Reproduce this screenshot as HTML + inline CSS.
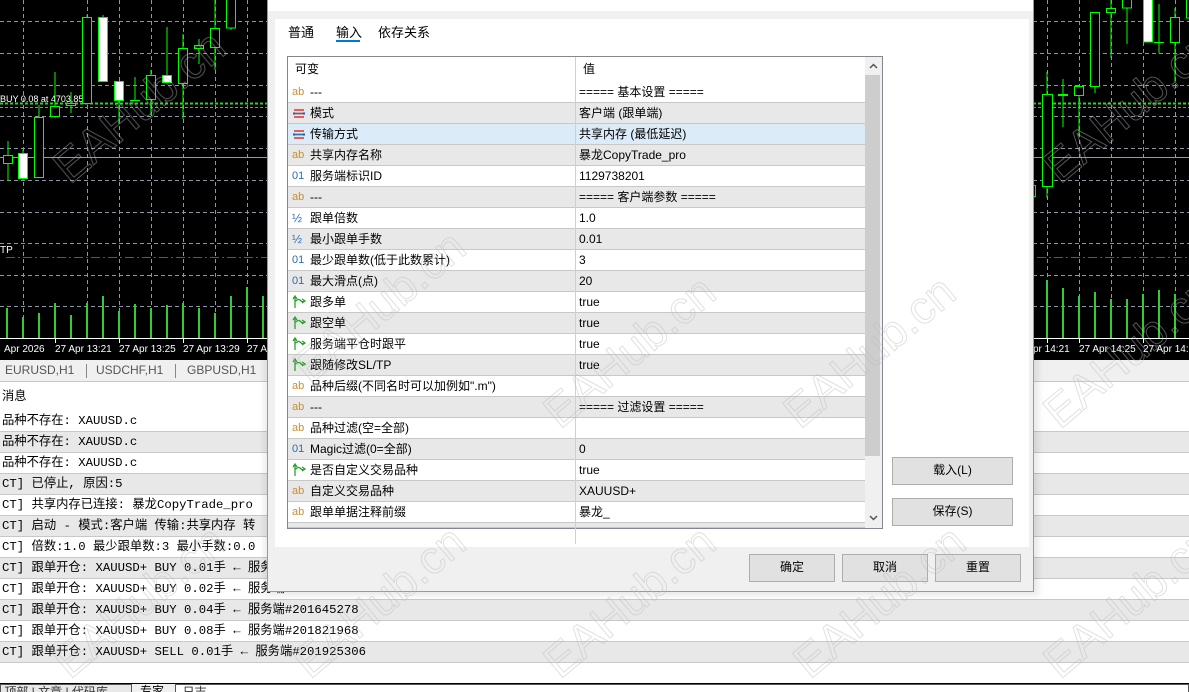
<!DOCTYPE html>
<html><head><meta charset="utf-8">
<style>
*{margin:0;padding:0;box-sizing:border-box}
body{width:1189px;height:692px;overflow:hidden;position:relative;background:#fff;font-family:"Liberation Sans","Noto Sans CJK SC",sans-serif;font-size:12px;color:#000}
.abs{position:absolute}
.log{position:absolute;left:0;width:1189px;height:21px;border-bottom:1px solid #c8c8c8;font-family:"Liberation Mono","Noto Sans CJK SC",monospace;font-size:12.3px;line-height:20px;white-space:nowrap;padding-left:2px}
.g{background:#e8e8e8}
.row{position:absolute;left:288px;width:577px;height:21px;border-bottom:1px solid #c8c8c8;white-space:nowrap;font-size:12px;line-height:20px}
.row .n{position:absolute;left:22px;top:0}
.row .v{position:absolute;left:291px;top:0}
.row .ic{position:absolute;left:4px;top:0;width:14px;height:20px;font-size:11px}
.row:after{content:"";position:absolute;left:287px;top:0;width:1px;height:21px;background:#d0d0d0}
.ab{color:#c8902c;font-size:11px}
.o1{color:#2a6db0;font-size:10px}
.btn{position:absolute;background:#e1e1e1;border:1px solid #adadad;text-align:center;font-size:12px;line-height:25px}
</style></head><body>

<!-- chart left -->
<svg class="abs" style="left:0;top:0" width="267" height="360">
<rect width="267" height="360" fill="#000"/>
<g stroke="#8a96a8" stroke-dasharray="4,3" stroke-width="1">
<line x1="0" y1="21.5" x2="267" y2="21.5"/><line x1="0" y1="53.5" x2="267" y2="53.5"/><line x1="0" y1="85.5" x2="267" y2="85.5"/><line x1="0" y1="116.5" x2="267" y2="116.5"/><line x1="0" y1="148.5" x2="267" y2="148.5"/><line x1="0" y1="180.5" x2="267" y2="180.5"/><line x1="0" y1="212.5" x2="267" y2="212.5"/><line x1="0" y1="243.5" x2="267" y2="243.5"/><line x1="0" y1="275.5" x2="267" y2="275.5"/><line x1="0" y1="306.5" x2="267" y2="306.5"/>
<line x1="23.5" y1="0" x2="23.5" y2="338"/><line x1="87.5" y1="0" x2="87.5" y2="338"/><line x1="119.5" y1="0" x2="119.5" y2="338"/><line x1="151.5" y1="0" x2="151.5" y2="338"/><line x1="183.5" y1="0" x2="183.5" y2="338"/><line x1="215.5" y1="0" x2="215.5" y2="338"/><line x1="247.5" y1="0" x2="247.5" y2="338"/>
</g>
<line x1="0" y1="157.5" x2="267" y2="157.5" stroke="#9a9a9a"/>
<line x1="6" y1="257.5" x2="267" y2="257.5" stroke="#e02020" stroke-dasharray="9,3,2,3"/>
<line x1="0" y1="103.5" x2="267" y2="103.5" stroke="#30d030" stroke-width="2" stroke-dasharray="3,2"/>
<line x1="0" y1="107.5" x2="267" y2="107.5" stroke="#30d030" stroke-dasharray="3,2"/>
<text x="0" y="102" fill="#fff" font-size="9" font-family="Liberation Sans">BUY 0.08 at 4703.85</text>
<text x="0" y="253" fill="#fff" font-size="10" font-family="Liberation Sans">TP</text>
<g stroke="#00ff00" stroke-width="1" fill="none">
<line x1="8" y1="141" x2="8" y2="181"/><rect x="3.5" y="155.5" width="9" height="8" fill="#000"/>
<line x1="23" y1="150" x2="23" y2="180"/><rect x="18.5" y="153.5" width="9" height="25" fill="#fff"/>
<line x1="39" y1="105" x2="39" y2="178"/><rect x="34.5" y="117.5" width="9" height="60" fill="#000"/>
<line x1="55" y1="72" x2="55" y2="118"/><rect x="50.5" y="106.5" width="9" height="10" fill="#000"/>
<line x1="71" y1="92" x2="71" y2="113"/><rect x="66.5" y="103.5" width="9" height="2" fill="#000"/>
<line x1="87" y1="15" x2="87" y2="104"/><rect x="82.5" y="17.5" width="9" height="86" fill="#000"/>
<line x1="103" y1="15" x2="103" y2="82"/><rect x="98.5" y="17.5" width="9" height="64" fill="#fff"/>
<rect x="114.5" y="81.5" width="9" height="19" fill="#fff"/><line x1="119" y1="100" x2="119" y2="124"/>
<line x1="135" y1="77" x2="135" y2="100"/><line x1="130" y1="100.5" x2="140" y2="100.5"/>
<line x1="151" y1="70" x2="151" y2="115"/><rect x="146.5" y="75.5" width="9" height="24" fill="#000"/>
<rect x="162.5" y="75.5" width="9" height="7" fill="#fff"/>
<line x1="167" y1="27" x2="167" y2="75"/>
<line x1="183" y1="34" x2="183" y2="119"/><rect x="178.5" y="48.5" width="9" height="35" fill="#000"/>
<line x1="199" y1="39" x2="199" y2="64"/><rect x="194.5" y="45.5" width="9" height="3" fill="#000"/>
<line x1="215" y1="0" x2="215" y2="70"/><rect x="210.5" y="28.5" width="9" height="19" fill="#000"/>
<rect x="226.5" y="-2" width="9" height="30" fill="#000"/><line x1="231" y1="28" x2="231" y2="30"/>
</g>
<g stroke="#32cd32" stroke-width="2">
<line x1="7" y1="308" x2="7" y2="338"/><line x1="23" y1="317" x2="23" y2="338"/><line x1="39" y1="313" x2="39" y2="338"/><line x1="55" y1="303" x2="55" y2="338"/><line x1="71" y1="315" x2="71" y2="338"/><line x1="87" y1="303" x2="87" y2="338"/><line x1="103" y1="296" x2="103" y2="338"/><line x1="119" y1="311" x2="119" y2="338"/><line x1="135" y1="304" x2="135" y2="338"/><line x1="151" y1="308" x2="151" y2="338"/><line x1="167" y1="305" x2="167" y2="338"/><line x1="183" y1="303" x2="183" y2="338"/><line x1="199" y1="308" x2="199" y2="338"/><line x1="215" y1="313" x2="215" y2="338"/><line x1="231" y1="296" x2="231" y2="338"/><line x1="247" y1="287" x2="247" y2="338"/><line x1="263" y1="296" x2="263" y2="338"/>
</g>
<line x1="0" y1="338.5" x2="267" y2="338.5" stroke="#fff"/>
<g stroke="#fff"><line x1="55.5" y1="338" x2="55.5" y2="343"/><line x1="119.5" y1="338" x2="119.5" y2="343"/><line x1="183.5" y1="338" x2="183.5" y2="343"/><line x1="247.5" y1="338" x2="247.5" y2="343"/></g>
<g fill="#fff" font-size="10" font-family="Liberation Sans"><text x="4" y="352">Apr 2026</text><text x="55" y="352">27 Apr 13:21</text><text x="119" y="352">27 Apr 13:25</text><text x="183" y="352">27 Apr 13:29</text><text x="247" y="352">27 A</text></g>
</svg>

<!-- chart right -->
<svg class="abs" style="left:1033px;top:0" width="156" height="360">
<rect width="156" height="360" fill="#000"/>
<g stroke="#8a96a8" stroke-dasharray="4,3">
<line x1="0" y1="21.5" x2="156" y2="21.5"/><line x1="0" y1="53.5" x2="156" y2="53.5"/><line x1="0" y1="85.5" x2="156" y2="85.5"/><line x1="0" y1="116.5" x2="156" y2="116.5"/><line x1="0" y1="148.5" x2="156" y2="148.5"/><line x1="0" y1="180.5" x2="156" y2="180.5"/><line x1="0" y1="212.5" x2="156" y2="212.5"/><line x1="0" y1="243.5" x2="156" y2="243.5"/><line x1="0" y1="275.5" x2="156" y2="275.5"/><line x1="0" y1="306.5" x2="156" y2="306.5"/>
<line x1="14.5" y1="0" x2="14.5" y2="338"/><line x1="46.5" y1="0" x2="46.5" y2="338"/><line x1="78.5" y1="0" x2="78.5" y2="338"/><line x1="110.5" y1="0" x2="110.5" y2="338"/><line x1="142.5" y1="0" x2="142.5" y2="338"/>
</g>
<line x1="0" y1="157.5" x2="156" y2="157.5" stroke="#9a9a9a"/>
<line x1="4" y1="257.5" x2="156" y2="257.5" stroke="#e02020" stroke-dasharray="9,3,2,3"/>
<line x1="0" y1="103.5" x2="156" y2="103.5" stroke="#30d030" stroke-width="2" stroke-dasharray="3,2"/>
<line x1="0" y1="107.5" x2="156" y2="107.5" stroke="#30d030" stroke-dasharray="3,2"/>
<g stroke="#00ff00" fill="none">
<rect x="-3.5" y="185.5" width="6" height="11" fill="#000"/>
<line x1="14" y1="72" x2="14" y2="198"/><rect x="9.5" y="94.5" width="10" height="92" fill="#000"/>
<line x1="30" y1="79" x2="30" y2="127"/><line x1="25" y1="95" x2="35" y2="95" stroke-width="2"/>
<line x1="46" y1="95" x2="46" y2="136"/><rect x="41.5" y="86.5" width="9" height="9" fill="#000"/>
<line x1="62" y1="86" x2="62" y2="93"/><rect x="57.5" y="12.5" width="9" height="74" fill="#000"/>
<line x1="78" y1="0" x2="78" y2="58"/><rect x="73.5" y="8.5" width="9" height="4" fill="#000"/>
<line x1="94" y1="8" x2="94" y2="44"/><rect x="89.5" y="-2" width="9" height="10" fill="#000"/>
<rect x="110.5" y="-2" width="9" height="44" fill="#fff"/>
<line x1="126" y1="4" x2="126" y2="53"/><line x1="121" y1="42.5" x2="131" y2="42.5"/>
<line x1="142" y1="8" x2="142" y2="82"/><rect x="137.5" y="17.5" width="9" height="25" fill="#000"/>
<rect x="153.5" y="-2" width="9" height="20" fill="#000"/>
</g>
<g stroke="#32cd32" stroke-width="2">
<line x1="14" y1="280" x2="14" y2="338"/><line x1="30" y1="288" x2="30" y2="338"/><line x1="46" y1="296" x2="46" y2="338"/><line x1="62" y1="292" x2="62" y2="338"/><line x1="78" y1="299" x2="78" y2="338"/><line x1="94" y1="299" x2="94" y2="338"/><line x1="110" y1="294" x2="110" y2="338"/><line x1="126" y1="290" x2="126" y2="338"/><line x1="142" y1="294" x2="142" y2="338"/>
</g>
<line x1="0" y1="338.5" x2="156" y2="338.5" stroke="#fff"/>
<g stroke="#fff"><line x1="14.5" y1="338" x2="14.5" y2="343"/><line x1="46.5" y1="338" x2="46.5" y2="343"/><line x1="110.5" y1="338" x2="110.5" y2="343"/></g>
<g fill="#fff" font-size="10" font-family="Liberation Sans"><text x="0" y="352">pr 14:21</text><text x="46" y="352">27 Apr 14:25</text><text x="110" y="352">27 Apr 14:2</text></g>
</svg>

<!-- chart tabs -->
<div class="abs" style="left:0;top:360px;width:1189px;height:22px;background:#f0f0f0;border-bottom:1px solid #c8c8c8;color:#555;font-size:12px;line-height:21px">
<span class="abs" style="left:5px">EURUSD,H1</span><span class="abs" style="left:86px;top:4px;width:1px;height:14px;background:#888"></span>
<span class="abs" style="left:96px">USDCHF,H1</span><span class="abs" style="left:175px;top:4px;width:1px;height:14px;background:#888"></span>
<span class="abs" style="left:187px">GBPUSD,H1</span></div>

<!-- log -->
<div class="log" style="top:386px;font-family:'Liberation Sans','Noto Sans CJK SC',sans-serif;border-bottom:none">消息</div>
<div class="log" style="top:411px">品种不存在: XAUUSD.c</div>
<div class="log g" style="top:432px">品种不存在: XAUUSD.c</div>
<div class="log" style="top:453px">品种不存在: XAUUSD.c</div>
<div class="log g" style="top:474px">CT] 已停止, 原因:5</div>
<div class="log" style="top:495px">CT] 共享内存已连接: 暴龙CopyTrade_pro</div>
<div class="log g" style="top:516px">CT] 启动 - 模式:客户端 传输:共享内存 转</div>
<div class="log" style="top:537px">CT] 倍数:1.0 最少跟单数:3 最小手数:0.0</div>
<div class="log g" style="top:558px">CT] 跟单开仓: XAUUSD+ BUY 0.01手 ← 服务端#201627963</div>
<div class="log" style="top:579px">CT] 跟单开仓: XAUUSD+ BUY 0.02手 ← 服务端#201627963</div>
<div class="log g" style="top:600px">CT] 跟单开仓: XAUUSD+ BUY 0.04手 ← 服务端#201645278</div>
<div class="log" style="top:621px">CT] 跟单开仓: XAUUSD+ BUY 0.08手 ← 服务端#201821968</div>
<div class="log g" style="top:642px">CT] 跟单开仓: XAUUSD+ SELL 0.01手 ← 服务端#201925306</div>
<div class="abs" style="left:0;top:683px;width:1189px;height:9px;background:#f0f0f0;border-top:1px solid #000"></div>
<div class="abs" style="left:0;top:684px;width:132px;height:8px;border:1px solid #555;border-bottom:none;background:#e8e8e8;font-size:12px;line-height:14px;overflow:hidden;color:#333">&nbsp;顶部 | 文章 | 代码库</div>
<div class="abs" style="left:140px;top:684px;font-size:12px;line-height:14px;height:8px;overflow:hidden">专家</div>
<div class="abs" style="left:175px;top:684px;width:1014px;height:8px;border:1px solid #555;border-bottom:none;background:#fff;font-size:12px;line-height:14px;overflow:hidden;color:#333">&nbsp;&nbsp;日志</div>

<!-- dialog -->
<div class="abs" style="left:264px;top:0;width:775px;height:596px;background:rgba(0,0,0,0.08);filter:blur(3px)"></div>
<div class="abs" style="left:267px;top:-2px;width:767px;height:594px;background:#f0f0f0;border:1px solid #999">
 <div class="abs" style="left:0;top:0;width:765px;height:12px;background:#fff"></div>
 <div class="abs" style="left:7px;top:20px;width:754px;height:528px;background:#fff"></div>
</div>
<div class="abs" style="left:288px;top:22px;font-size:13px">普通</div>
<div class="abs" style="left:336px;top:22px;font-size:13px">输入</div>
<div class="abs" style="left:378px;top:22px;font-size:13px">依存关系</div>
<div class="abs" style="left:336px;top:40px;width:24px;height:2px;background:#0078d7"></div>

<div class="abs" style="left:287px;top:56px;width:596px;height:473px;border:1px solid #828790;background:#fff"></div>
<div class="abs" style="left:288px;top:57px;width:577px;height:25px;font-size:12px;line-height:25px"><span class="abs" style="left:7px">可变</span><span class="abs" style="left:287px;top:0;width:1px;height:25px;background:#d0d0d0"></span><span class="abs" style="left:295px">值</span></div>

<div class="row" style="top:82px"><span class="ic ab">ab</span><span class="n">---</span><span class="v">===== 基本设置 =====</span></div>
<div class="row g" style="top:103px"><svg class="ic" viewBox="0 0 14 20"><path d="M2 7h10M2 10.5h10M2 14h10" stroke="#e03030" stroke-width="1.4"/><path d="M1 10.5h12" stroke="#2a6db0" stroke-width="1.4"/><path d="M2 9v3M12 9v3" stroke="#2a6db0"/></svg><span class="n">模式</span><span class="v">客户端 (跟单端)</span></div>
<div class="row" style="top:124px;background:#dcebf8"><svg class="ic" viewBox="0 0 14 20"><path d="M2 7h10M2 10.5h10M2 14h10" stroke="#e03030" stroke-width="1.4"/><path d="M1 10.5h12" stroke="#2a6db0" stroke-width="1.4"/><path d="M2 9v3M12 9v3" stroke="#2a6db0"/></svg><span class="n">传输方式</span><span class="v">共享内存 (最低延迟)</span></div>
<div class="row g" style="top:145px"><span class="ic ab">ab</span><span class="n">共享内存名称</span><span class="v">暴龙CopyTrade_pro</span></div>
<div class="row" style="top:166px"><span class="ic o1">01</span><span class="n">服务端标识ID</span><span class="v">1129738201</span></div>
<div class="row g" style="top:187px"><span class="ic ab">ab</span><span class="n">---</span><span class="v">===== 客户端参数 =====</span></div>
<div class="row" style="top:208px"><span class="ic o1" style="font-size:12px">½</span><span class="n">跟单倍数</span><span class="v">1.0</span></div>
<div class="row g" style="top:229px"><span class="ic o1" style="font-size:12px">½</span><span class="n">最小跟单手数</span><span class="v">0.01</span></div>
<div class="row" style="top:250px"><span class="ic o1">01</span><span class="n">最少跟单数(低于此数累计)</span><span class="v">3</span></div>
<div class="row g" style="top:271px"><span class="ic o1">01</span><span class="n">最大滑点(点)</span><span class="v">20</span></div>
<div class="row" style="top:292px"><svg class="ic" viewBox="0 0 14 20"><path d="M3 16V5M1 7l2-3 2 3M3 9c2 0 3-3 5-1s2 2 5 1M10 7l3 2-3 2" stroke="#2ca02c" stroke-width="1.3" fill="none"/></svg><span class="n">跟多单</span><span class="v">true</span></div>
<div class="row g" style="top:313px"><svg class="ic" viewBox="0 0 14 20"><path d="M3 16V5M1 7l2-3 2 3M3 9c2 0 3-3 5-1s2 2 5 1M10 7l3 2-3 2" stroke="#2ca02c" stroke-width="1.3" fill="none"/></svg><span class="n">跟空单</span><span class="v">true</span></div>
<div class="row" style="top:334px"><svg class="ic" viewBox="0 0 14 20"><path d="M3 16V5M1 7l2-3 2 3M3 9c2 0 3-3 5-1s2 2 5 1M10 7l3 2-3 2" stroke="#2ca02c" stroke-width="1.3" fill="none"/></svg><span class="n">服务端平仓时跟平</span><span class="v">true</span></div>
<div class="row g" style="top:355px"><svg class="ic" viewBox="0 0 14 20"><path d="M3 16V5M1 7l2-3 2 3M3 9c2 0 3-3 5-1s2 2 5 1M10 7l3 2-3 2" stroke="#2ca02c" stroke-width="1.3" fill="none"/></svg><span class="n">跟随修改SL/TP</span><span class="v">true</span></div>
<div class="row" style="top:376px"><span class="ic ab">ab</span><span class="n">品种后缀(不同名时可以加例如".m")</span><span class="v"></span></div>
<div class="row g" style="top:397px"><span class="ic ab">ab</span><span class="n">---</span><span class="v">===== 过滤设置 =====</span></div>
<div class="row" style="top:418px"><span class="ic ab">ab</span><span class="n">品种过滤(空=全部)</span><span class="v"></span></div>
<div class="row g" style="top:439px"><span class="ic o1">01</span><span class="n">Magic过滤(0=全部)</span><span class="v">0</span></div>
<div class="row" style="top:460px"><svg class="ic" viewBox="0 0 14 20"><path d="M3 16V5M1 7l2-3 2 3M3 9c2 0 3-3 5-1s2 2 5 1M10 7l3 2-3 2" stroke="#2ca02c" stroke-width="1.3" fill="none"/></svg><span class="n">是否自定义交易品种</span><span class="v">true</span></div>
<div class="row g" style="top:481px"><span class="ic ab">ab</span><span class="n">自定义交易品种</span><span class="v">XAUUSD+</span></div>
<div class="row" style="top:502px"><span class="ic ab">ab</span><span class="n">跟单单据注释前缀</span><span class="v">暴龙_</span></div>
<div class="row g" style="top:523px;height:5px"></div>

<div class="abs" style="left:865px;top:57px;width:17px;height:471px;background:#f0f0f0"></div>
<div class="abs" style="left:865px;top:75px;width:15px;height:381px;background:#cdcdcd"></div>
<svg class="abs" style="left:865px;top:60px" width="17" height="12"><path d="M5 8l3.5-3.5L12 8" stroke="#555" stroke-width="1.5" fill="none"/></svg>
<svg class="abs" style="left:865px;top:512px" width="17" height="12"><path d="M5 4l3.5 3.5L12 4" stroke="#555" stroke-width="1.5" fill="none"/></svg>

<div class="btn" style="left:892px;top:457px;width:121px;height:28px">载入(L)</div>
<div class="btn" style="left:892px;top:498px;width:121px;height:28px">保存(S)</div>
<div class="btn" style="left:749px;top:554px;width:86px;height:28px">确定</div>
<div class="btn" style="left:842px;top:554px;width:86px;height:28px">取消</div>
<div class="btn" style="left:935px;top:554px;width:86px;height:28px">重置</div>

<!-- watermarks -->
<svg class="abs" style="left:0;top:0" width="1189" height="692">
<g font-family="Liberation Sans" font-size="46" fill="none" stroke="#bbb" stroke-width="1" opacity="0.45">
<text transform="translate(70,185) rotate(-40)">EAHub.cn</text>
<text transform="translate(310,385) rotate(-40)">EAHub.cn</text>
<text transform="translate(560,430) rotate(-40)">EAHub.cn</text>
<text transform="translate(800,430) rotate(-40)">EAHub.cn</text>
<text transform="translate(1060,185) rotate(-40)">EAHub.cn</text>
<text transform="translate(1060,430) rotate(-40)">EAHub.cn</text>
<text transform="translate(70,680) rotate(-40)">EAHub.cn</text>
<text transform="translate(310,680) rotate(-40)">EAHub.cn</text>
<text transform="translate(560,680) rotate(-40)">EAHub.cn</text>
<text transform="translate(810,680) rotate(-40)">EAHub.cn</text>
<text transform="translate(1060,680) rotate(-40)">EAHub.cn</text>
</g></svg>
</body></html>
